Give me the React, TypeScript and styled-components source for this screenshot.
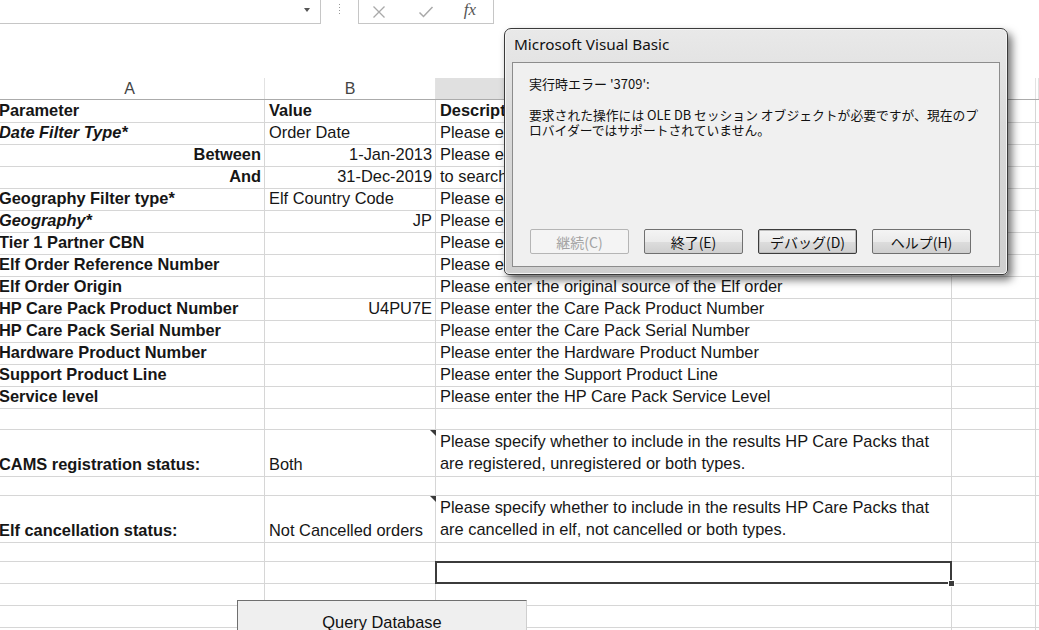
import React from 'react';
import styled, { createGlobalStyle, css } from 'styled-components';

const GlobalStyle = createGlobalStyle`
  html, body {
    margin: 0;
    padding: 0;
    background: #ffffff;
    overflow: hidden;
  }
  body {
    position: relative;
    width: 1039px;
    height: 630px;
    font-family: 'Liberation Sans', Arial, sans-serif;
    color: #111;
  }
`;

const GRID = '#d6d6d6';
const COLS = '270px 171px 516px 84px 1fr';

const Page = styled.div`
  display: flex;
  flex-direction: column;
  width: 1039px;
  height: 630px;
  overflow: hidden;
`;

/* ---------- formula bar ---------- */

const FormulaBar = styled.div`
  display: flex;
  height: 24px;
  flex-shrink: 0;
`;

const NameBox = styled.div`
  width: 321px;
  border-right: 1px solid #c6c6c6;
  border-bottom: 1px solid #c6c6c6;
  display: flex;
  align-items: center;
  justify-content: flex-end;
  padding-right: 10px;
  box-sizing: border-box;
`;

const DropArrow = styled.span`
  width: 0;
  height: 0;
  border-left: 3px solid transparent;
  border-right: 3px solid transparent;
  border-top: 4px solid #555;
  margin-top: -4px;
`;

const Grip = styled.div`
  width: 37px;
  display: flex;
  justify-content: center;
  padding-top: 4px;
  box-sizing: border-box;
`;

const GripDots = styled.span`
  display: flex;
  flex-direction: column;
  gap: 2px;
  span {
    width: 1px;
    height: 1px;
    background: #999;
  }
`;

const FxBox = styled.div`
  width: 136px;
  border: 1px solid #c6c6c6;
  border-top: none;
  display: flex;
  align-items: center;
  box-sizing: border-box;
  padding-left: 13px;
`;

const FxButton = styled.span<{ $w: number }>`
  width: ${(p) => p.$w}px;
  display: flex;
  align-items: center;
  justify-content: flex-start;
`;

const FxText = styled.span`
  font-family: 'Liberation Serif', 'Times New Roman', serif;
  font-style: italic;
  font-size: 17px;
  color: #555;
  margin-top: -3px;
`;

const Spacer = styled.div`
  height: 54px;
  flex-shrink: 0;
`;

/* ---------- sheet ---------- */

const Sheet = styled.div`
  display: flex;
  flex-direction: column;
  margin-left: -5px;
  width: 1044px;
`;

const HeaderRow = styled.div`
  display: grid;
  grid-template-columns: ${COLS};
  height: 22px;
  border-bottom: 1px solid #ababab;
  box-sizing: border-box;
`;

const ColHead = styled.div<{ $active?: boolean }>`
  display: flex;
  align-items: center;
  justify-content: center;
  font-size: 16px;
  color: #444;
  border-right: 1px solid #e2e2e2;
  ${(p) =>
    p.$active &&
    css`
      background: #e0e0e0;
      border-right-color: #c9c9c9;
    `}
`;

const Row = styled.div<{ $h: number }>`
  display: grid;
  grid-template-columns: ${COLS};
  height: ${(p) => p.$h}px;
  flex-shrink: 0;
`;

const Cell = styled.div<{
  $align?: 'left' | 'right';
  $bold?: boolean;
  $italic?: boolean;
  $comment?: boolean;
  $selected?: boolean;
}>`
  position: relative;
  display: flex;
  flex-direction: column;
  justify-content: flex-end;
  align-items: ${(p) => (p.$align === 'right' ? 'flex-end' : 'flex-start')};
  border-right: 1px solid ${GRID};
  border-bottom: 1px solid ${GRID};
  box-sizing: border-box;
  padding: 0 3px 2px 4px;
  font-size: 16.4px;
  line-height: 20px;
  white-space: nowrap;
  font-weight: ${(p) => (p.$bold ? 700 : 400)};
  font-style: ${(p) => (p.$italic ? 'italic' : 'normal')};
  color: #161616;

  ${(p) =>
    p.$comment &&
    css`
      &::after {
        content: '';
        position: absolute;
        top: 0;
        right: -1px;
        width: 0;
        height: 0;
        border-left: 6px solid transparent;
        border-top: 6px solid #3a3a3a;
      }
    `}

  ${(p) =>
    p.$selected &&
    css`
      &::after {
        content: '';
        position: absolute;
        top: -1px;
        left: -1px;
        right: -1px;
        bottom: -1px;
        border: 2px solid #3b3b3b;
      }
      &::before {
        content: '';
        position: absolute;
        right: -4px;
        bottom: -4px;
        width: 5px;
        height: 5px;
        background: #3b3b3b;
        border: 1px solid #fff;
        z-index: 1;
      }
    `}
`;

const Line = styled.span<{ $lh?: number }>`
  line-height: ${(p) => p.$lh ?? 20}px;
`;

/* ---------- VBA error dialog ---------- */

const Dialog = styled.div`
  position: absolute;
  left: 504px;
  top: 28px;
  width: 504px;
  height: 247px;
  box-sizing: border-box;
  border: 1px solid #3a3a3a;
  border-radius: 7px 7px 5px 5px;
  background: linear-gradient(180deg, #e9e9e9 0%, #d9d9d9 40%, #cfcfcf 100%);
  box-shadow:
    inset 0 0 0 1px #f4f4f4,
    4px 5px 9px rgba(0, 0, 0, 0.55);
  display: flex;
  flex-direction: column;
  padding: 0 7px 7px 7px;
`;

const TitleBar = styled.div`
  height: 33px;
  display: flex;
  align-items: center;
  padding: 0 0 3px 2px;
  box-sizing: border-box;
  font-family: 'Noto Sans', 'Open Sans', sans-serif;
  font-size: 15.3px;
  color: #111;
`;

const Client = styled.div`
  flex: 1;
  background: #f0f0f0;
  border: 1px solid #8c8c8c;
  display: flex;
  flex-direction: column;
  justify-content: space-between;
  padding: 13px 0 12px 16px;
  font-family: 'Noto Sans CJK JP', 'Noto Sans', sans-serif;
  font-size: 12.8px;
  color: #111;
`;

const Message = styled.div`
  display: flex;
  flex-direction: column;
`;

const ErrorCode = styled.div`
  font-size: 13px;
  line-height: 16px;
  margin-bottom: 15px;
`;

const ErrorLine = styled.div`
  line-height: 15px;
  white-space: nowrap;
`;

const ButtonRow = styled.div`
  display: flex;
  gap: 15px;
  padding-left: 1px;
`;

const DlgButton = styled.button<{ $disabled?: boolean; $default?: boolean }>`
  width: 99px;
  height: 25px;
  box-sizing: border-box;
  border: 1px solid ${(p) => (p.$disabled ? '#b5b5b5' : '#707070')};
  border-radius: 2px;
  background: linear-gradient(180deg, #f4f4f4 0%, #ebebeb 50%, #dddddd 51%, #cfcfcf 100%);
  font-family: 'Noto Sans CJK JP', 'Noto Sans', sans-serif;
  font-size: 14px;
  line-height: 20px;
  color: ${(p) => (p.$disabled ? '#a3a3a3' : '#111')};
  padding: 0;
  ${(p) =>
    p.$disabled &&
    css`
      background: #f4f4f4;
    `}
  ${(p) =>
    p.$default &&
    css`
      border-color: #3c3c3c;
      box-shadow: inset 0 0 0 1px #bdbdbd;
    `}
`;

/* ---------- form button ---------- */

const QueryButton = styled.div`
  position: absolute;
  left: 237px;
  top: 600px;
  width: 290px;
  height: 40px;
  box-sizing: border-box;
  background: #efefef;
  border-top: 1px solid #6f6f6f;
  border-left: 1px solid #6f6f6f;
  border-right: 1px solid #cfcfcf;
  display: flex;
  justify-content: center;
  padding-top: 12px;
  font-size: 16.4px;
  color: #111;
`;

type RowData = {
  a?: string;
  aAlign?: 'left' | 'right';
  aBold?: boolean;
  aItalic?: boolean;
  b?: string;
  bAlign?: 'left' | 'right';
  bBold?: boolean;
  bComment?: boolean;
  c?: string[];
  cBold?: boolean;
  h?: number;
  selected?: boolean;
};

// descriptions under the dialog are only partly visible, as in the sheet
const rows: RowData[] = [
  { a: 'Parameter', aBold: true, b: 'Value', bBold: true, c: ['Descript'], cBold: true },
  { a: 'Date Filter Type*', aBold: true, aItalic: true, b: 'Order Date', c: ['Please e'] },
  { a: 'Between', aBold: true, aAlign: 'right', b: '1-Jan-2013', bAlign: 'right', c: ['Please e'] },
  { a: 'And', aBold: true, aAlign: 'right', b: '31-Dec-2019', bAlign: 'right', c: ['to search'] },
  { a: 'Geography Filter type*', aBold: true, b: 'Elf Country Code', c: ['Please e'] },
  { a: 'Geography*', aBold: true, aItalic: true, b: 'JP', bAlign: 'right', c: ['Please e'] },
  { a: 'Tier 1 Partner CBN', aBold: true, c: ['Please e'] },
  { a: 'Elf Order Reference Number', aBold: true, c: ['Please e'] },
  { a: 'Elf Order Origin', aBold: true, c: ['Please enter the original source of the Elf order'] },
  { a: 'HP Care Pack Product Number', aBold: true, b: 'U4PU7E', bAlign: 'right', c: ['Please enter the Care Pack Product Number'] },
  { a: 'HP Care Pack Serial Number', aBold: true, c: ['Please enter the Care Pack Serial Number'] },
  { a: 'Hardware Product Number', aBold: true, c: ['Please enter the Hardware Product Number'] },
  { a: 'Support Product Line', aBold: true, c: ['Please enter the Support Product Line'] },
  { a: 'Service level', aBold: true, c: ['Please enter the HP Care Pack Service Level'] },
  {},
  {
    a: 'CAMS registration status:',
    aBold: true,
    b: 'Both',
    bComment: true,
    h: 44,
    c: ['Please specify whether to include in the results HP Care Packs that', 'are registered, unregistered or both types.'],
  },
  {},
  {
    a: 'Elf cancellation status:',
    aBold: true,
    b: 'Not Cancelled orders',
    bComment: true,
    h: 44,
    c: ['Please specify whether to include in the results HP Care Packs that', 'are cancelled in elf, not cancelled or both types.'],
  },
  {},
  { selected: true },
  {},
  {},
  {},
];

const CrossIcon = () => (
  <svg width="14" height="14" viewBox="0 0 14 14">
    <path d="M1.5 1.5 L12.5 12.5 M12.5 1.5 L1.5 12.5" stroke="#a9a9a9" strokeWidth="1.3" fill="none" />
  </svg>
);

const CheckIcon = () => (
  <svg width="16" height="14" viewBox="0 0 16 14">
    <path d="M1.5 7.5 L5.5 11.5 L14.5 2" stroke="#a9a9a9" strokeWidth="1.5" fill="none" />
  </svg>
);

const App: React.FC = () => {
  return (
    <>
      <GlobalStyle />
      <Page>
        <FormulaBar>
          <NameBox>
            <DropArrow />
          </NameBox>
          <Grip>
            <GripDots>
              <span />
              <span />
              <span />
              <span />
            </GripDots>
          </Grip>
          <FxBox>
            <FxButton $w={47}>
              <CrossIcon />
            </FxButton>
            <FxButton $w={47}>
              <CheckIcon />
            </FxButton>
            <FxButton $w={30}>
              <FxText>fx</FxText>
            </FxButton>
          </FxBox>
        </FormulaBar>
        <Spacer />
        <Sheet>
          <HeaderRow>
            <ColHead>A</ColHead>
            <ColHead>B</ColHead>
            <ColHead $active>C</ColHead>
            <ColHead />
            <ColHead />
          </HeaderRow>
          {rows.map((r, i) => (
            <Row key={i} $h={r.h ?? 22}>
              <Cell $align={r.aAlign} $bold={r.aBold} $italic={r.aItalic}>
                {r.a}
              </Cell>
              <Cell $align={r.bAlign} $bold={r.bBold} $comment={r.bComment}>
                {r.b}
              </Cell>
              <Cell $bold={r.cBold} $selected={r.selected}>
                {r.c?.map((line) => (
                  <Line key={line} $lh={r.c && r.c.length > 1 ? 22 : 20}>
                    {line}
                  </Line>
                ))}
              </Cell>
              <Cell />
              <Cell />
            </Row>
          ))}
        </Sheet>
      </Page>

      <QueryButton>Query Database</QueryButton>

      <Dialog>
        <TitleBar>Microsoft Visual Basic</TitleBar>
        <Client>
          <Message>
            <ErrorCode>実行時エラー '3709':</ErrorCode>
            <ErrorLine>要求された操作には OLE DB セッション オブジェクトが必要ですが、現在のプ</ErrorLine>
            <ErrorLine>ロバイダーではサポートされていません。</ErrorLine>
          </Message>
          <ButtonRow>
            <DlgButton $disabled>継続(C)</DlgButton>
            <DlgButton>終了(E)</DlgButton>
            <DlgButton $default>デバッグ(D)</DlgButton>
            <DlgButton>ヘルプ(H)</DlgButton>
          </ButtonRow>
        </Client>
      </Dialog>
    </>
  );
};

export default App;
